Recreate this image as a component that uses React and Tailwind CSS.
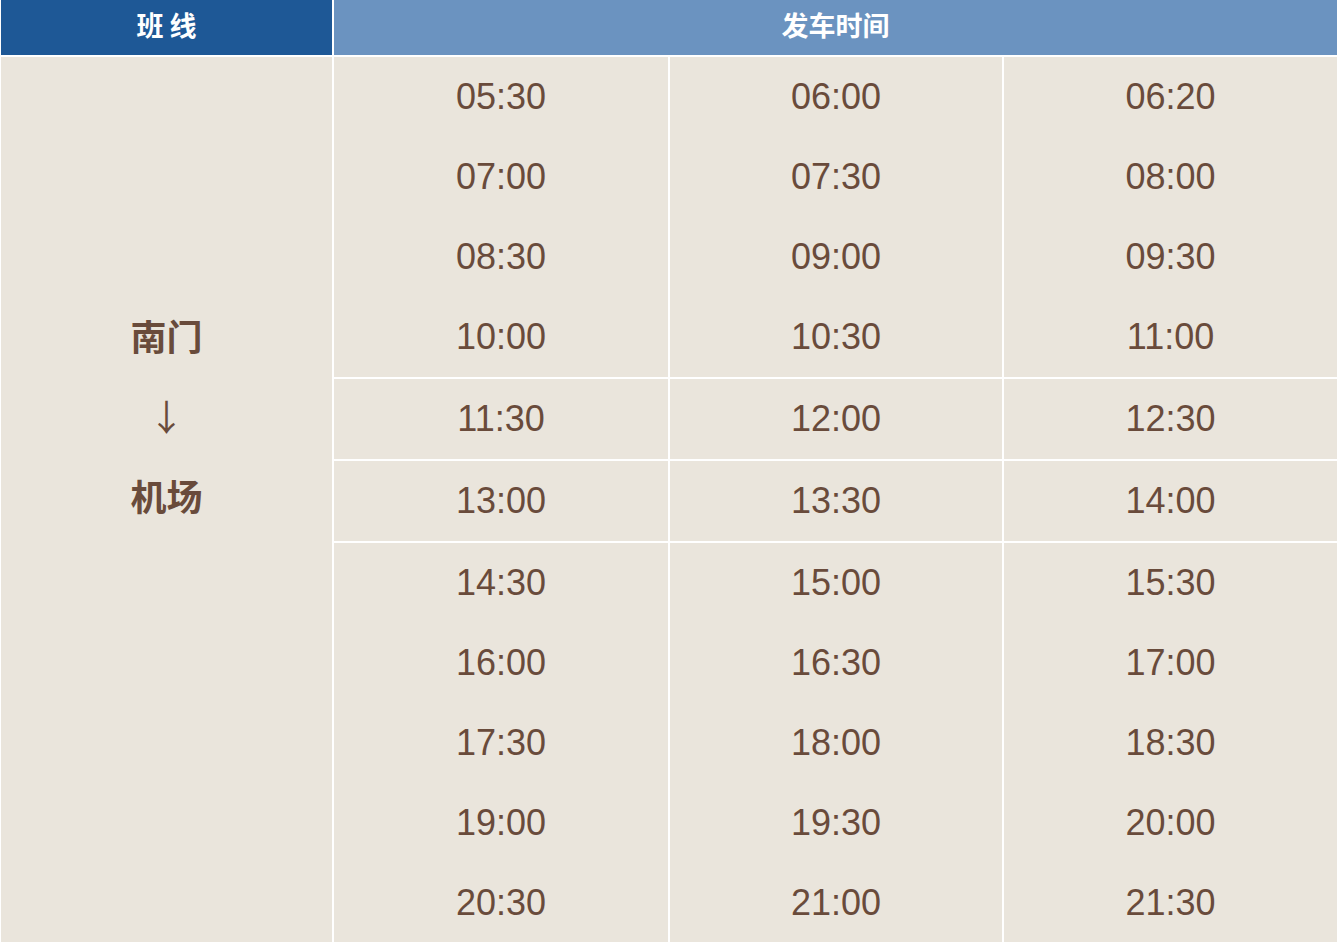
const BLOCKS = [
  [
    ['05:30', '06:00', '06:20'],
    ['07:00', '07:30', '08:00'],
    ['08:30', '09:00', '09:30'],
    ['10:00', '10:30', '11:00'],
  ],
  [['11:30', '12:00', '12:30']],
  [['13:00', '13:30', '14:00']],
  [
    ['14:30', '15:00', '15:30'],
    ['16:00', '16:30', '17:00'],
    ['17:30', '18:00', '18:30'],
    ['19:00', '19:30', '20:00'],
    ['20:30', '21:00', '21:30'],
  ],
]

const cjk = { fontFamily: '"Noto Sans CJK SC", "Liberation Sans", sans-serif' }

export default function App() {
  return (
    <div className="w-[1338px] h-[942px] overflow-hidden bg-white px-px">
      {/* header */}
      <div className="grid grid-cols-[331px_1003px] gap-[2px] h-[55px]" style={cjk}>
        <div className="bg-[#1e5896] text-white font-bold text-[27px] flex items-center justify-center pb-[5px]">
          班 线
        </div>
        <div className="bg-[#6b93c0] text-white font-bold text-[27px] flex items-center justify-center pb-[5px]">
          发车时间
        </div>
      </div>

      {/* body */}
      <div className="mt-[2px] grid grid-cols-[331px_334px_332px_333px] grid-rows-[320px_80px_80px_400px] gap-[2px] text-[#694b3b]">
        <div className="row-span-4 bg-[#eae5dc] pt-[238px] flex flex-col items-center" style={cjk}>
          <div className="h-[80px] flex items-center text-[36px] font-bold">南门</div>
          <div className="h-[80px] flex items-center text-[36px] font-normal">↓</div>
          <div className="h-[80px] flex items-center text-[36px] font-bold">机场</div>
        </div>

        {BLOCKS.map((rows, b) =>
          [0, 1, 2].map((c) => (
            <div key={`${b}-${c}`} className="bg-[#eae5dc] flex flex-col">
              {rows.map((r, i) => (
                <div
                  key={i}
                  className="h-[80px] flex items-center justify-center text-[36px]"
                  style={{ fontFamily: '"Liberation Sans", Arial, sans-serif' }}
                >
                  {r[c]}
                </div>
              ))}
            </div>
          ))
        )}
      </div>
    </div>
  )
}
